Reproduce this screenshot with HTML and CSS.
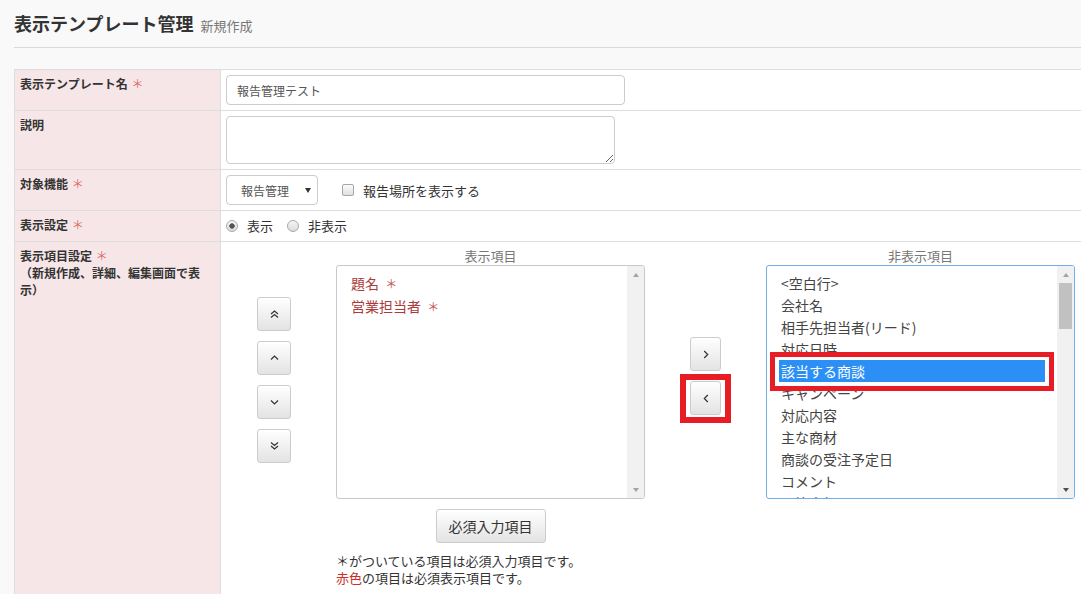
FILE: index.html
```html
<!DOCTYPE html>
<html lang="ja">
<head>
<meta charset="utf-8">
<title>表示テンプレート管理</title>
<link rel="stylesheet" href="styles.css">
</head>
<body>
<div class="page">
  <div class="page-header">
    <h1 class="title">表示テンプレート管理<small class="subtitle">新規作成</small></h1>
  </div>

  <div class="form">
    <div class="row">
      <div class="label">表示テンプレート名 <span class="req">＊</span></div>
      <div class="value"><input class="text-input" type="text" value="報告管理テスト"></div>
    </div>

    <div class="row">
      <div class="label">説明</div>
      <div class="value"><textarea class="textarea"></textarea></div>
    </div>

    <div class="row">
      <div class="label">対象機能 <span class="req">＊</span></div>
      <div class="value inline">
        <div class="select"><span>報告管理</span><span class="caret"></span></div>
        <label class="check-label"><span class="checkbox"></span>報告場所を表示する</label>
      </div>
    </div>

    <div class="row">
      <div class="label">表示設定 <span class="req">＊</span></div>
      <div class="value inline radios">
        <label class="radio-label"><span class="radio checked"></span>表示</label>
        <label class="radio-label"><span class="radio"></span>非表示</label>
      </div>
    </div>

    <div class="row">
      <div class="label">表示項目設定 <span class="req">＊</span><br>（新規作成、詳細、編集画面で表示）</div>
      <div class="value items">
        <div class="order-buttons">
          <button class="btn-icon" type="button"><svg width="9" height="8" viewBox="0 0 9 8"><path d="M1 4L4.5 1L8 4M1 7.5L4.5 4.5L8 7.5" fill="none" stroke="#333" stroke-width="1.2"/></svg></button>
          <button class="btn-icon" type="button"><svg width="9" height="6" viewBox="0 0 9 6"><path d="M1 4.5L4.5 1L8 4.5" fill="none" stroke="#333" stroke-width="1.2"/></svg></button>
          <button class="btn-icon" type="button"><svg width="9" height="6" viewBox="0 0 9 6"><path d="M1 1.5L4.5 5L8 1.5" fill="none" stroke="#333" stroke-width="1.2"/></svg></button>
          <button class="btn-icon" type="button"><svg width="9" height="8" viewBox="0 0 9 8"><path d="M1 0.5L4.5 3.5L8 0.5M1 4L4.5 7L8 4" fill="none" stroke="#333" stroke-width="1.2"/></svg></button>
        </div>

        <div class="list-col">
          <div class="list-title">表示項目</div>
          <div class="listbox">
            <ul class="options">
              <li class="required">題名 <span class="star">＊</span></li>
              <li class="required">営業担当者 <span class="star">＊</span></li>
            </ul>
            <div class="scrollbar">
              <span class="sb-arrow up"></span>
              <span class="sb-space"></span>
              <span class="sb-arrow down"></span>
            </div>
          </div>
          <div class="btn-wrap"><button class="btn" type="button">必須入力項目</button></div>
          <p class="note">＊がついている項目は必須入力項目です。<br><span class="red">赤色</span>の項目は必須表示項目です。</p>
        </div>

        <div class="move-buttons">
          <button class="btn-icon narrow" type="button"><svg width="6" height="9" viewBox="0 0 6 9"><path d="M1.2 1L4.7 4.5L1.2 8" fill="none" stroke="#333" stroke-width="1.2"/></svg></button>
          <div class="move-btn-wrap">
            <button class="btn-icon narrow" type="button"><svg width="6" height="9" viewBox="0 0 6 9"><path d="M4.8 1L1.3 4.5L4.8 8" fill="none" stroke="#333" stroke-width="1.2"/></svg></button>
            <span class="callout callout-btn"></span>
          </div>
        </div>

        <div class="list-col">
          <div class="list-title">非表示項目</div>
          <div class="listbox focused">
            <ul class="options">
              <li>&lt;空白行&gt;</li>
              <li>会社名</li>
              <li>相手先担当者(リード)</li>
              <li>対応日時</li>
              <li class="selected">該当する商談</li>
              <li>キャンペーン</li>
              <li>対応内容</li>
              <li>主な商材</li>
              <li>商談の受注予定日</li>
              <li>コメント</li>
              <li>予算金額</li>
            </ul>
            <div class="scrollbar">
              <span class="sb-arrow up"></span>
              <span class="sb-thumb"></span>
              <span class="sb-space"></span>
              <span class="sb-arrow down dark"></span>
            </div>
            <span class="callout callout-select"></span>
          </div>
        </div>
      </div>
    </div>
  </div>
</div>
</body>
</html>
```

FILE: styles.css
```css
* {
  box-sizing: border-box;
}

html,
body {
  margin: 0;
  overflow: hidden;
}

body {
  width: 1081px;
  height: 594px;
  background: #f9f9f9;
  font-family: "Noto Sans CJK JP", "Noto Sans", sans-serif;
  font-size: 13px;
  color: #333;
}

.page {
  padding-left: 14px;
}

.page-header {
  height: 48px;
  padding-top: 11px;
  border-bottom: 1px solid #d9d9d9;
  margin-bottom: 21px;
  overflow: hidden;
}

.title {
  margin: 0;
  font-size: 18px;
  line-height: 24px;
  font-weight: bold;
  color: #333;
}

.subtitle {
  margin-left: 7px;
  font-size: 13px;
  line-height: 1;
  font-weight: normal;
  color: #777;
}

.form {
  width: 1080px;
  border-top: 1px solid #ddd;
  border-left: 1px solid #ddd;
  background: #fff;
}

.row {
  display: flex;
  border-bottom: 1px solid #ddd;
}

.label {
  flex: 0 0 206px;
  padding: 5px;
  background: #f6e6e7;
  border-right: 1px solid #ddd;
  font-size: 12px;
  font-weight: bold;
  line-height: 17px;
  color: #333;
}

.req {
  margin-left: 1px;
  font-weight: normal;
  color: #dc6a67;
}

.value {
  flex: 1;
  padding: 5px;
  background: #fff;
}

.text-input {
  display: block;
  width: 399px;
  height: 30px;
  padding: 0 10px;
  border: 1px solid #ccc;
  border-radius: 4px;
  background: #fff;
  font: 12px "Noto Sans CJK JP", sans-serif;
  color: #555;
}

.textarea {
  display: block;
  width: 389px;
  height: 48px;
  margin: 0;
  border: 1px solid #ccc;
  border-radius: 4px;
  background: #fff;
}

.inline {
  display: flex;
  align-items: center;
}

.select {
  display: flex;
  align-items: center;
  justify-content: space-between;
  width: 92px;
  height: 30px;
  padding: 0 6px 0 14px;
  border: 1px solid #ccc;
  border-radius: 4px;
  background: #fff;
  font-size: 12px;
  color: #555;
}

.caret {
  width: 0;
  height: 0;
  border-left: 3.5px solid transparent;
  border-right: 3.5px solid transparent;
  border-top: 5px solid #333;
}

.check-label {
  display: flex;
  align-items: center;
  gap: 9px;
  margin-left: 24px;
  font-size: 13px;
  color: #333;
}

.checkbox {
  display: inline-block;
  width: 12px;
  height: 12px;
  border: 1px solid #a6a6a6;
  border-radius: 2px;
  background: linear-gradient(#fbfbfb, #e0e0e0);
}

.radios {
  line-height: 20px;
}

.radio-label {
  display: flex;
  align-items: center;
  gap: 9px;
  margin-right: 14px;
  font-size: 13px;
  color: #333;
}

.radio {
  display: inline-block;
  width: 12px;
  height: 12px;
  border: 1px solid #aaa;
  border-radius: 50%;
  background: linear-gradient(#f5f5f5, #dcdcdc);
}

.radio.checked {
  background: radial-gradient(circle, #555 0 2.4px, transparent 3px), linear-gradient(#f5f5f5, #dcdcdc);
}

.items {
  display: flex;
  align-items: flex-start;
  padding-bottom: 20px;
}

.order-buttons {
  display: flex;
  flex-direction: column;
  gap: 10px;
  margin: 50px 0 0 31px;
}

.move-buttons {
  display: flex;
  flex-direction: column;
  gap: 10px;
  margin: 90px 0 0 45px;
}

.btn-icon {
  display: flex;
  align-items: center;
  justify-content: center;
  width: 34px;
  height: 34px;
  padding: 0;
  border: 1px solid #ccc;
  border-radius: 3px;
  background: linear-gradient(#fff, #e3e3e3);
}

.btn-icon.narrow {
  width: 31px;
}

.move-btn-wrap {
  position: relative;
}

.callout {
  position: absolute;
  border: 5px solid #e81c24;
  pointer-events: none;
}

.callout-btn {
  left: -10px;
  top: -7px;
  width: 51px;
  height: 49px;
  border-width: 6px;
}

.callout-select {
  left: 3px;
  top: 86px;
  width: 284px;
  height: 39px;
}

.list-col {
  width: 309px;
  margin-left: 45px;
}

.list-title {
  font-size: 13px;
  line-height: 18px;
  text-align: center;
  color: #777;
}

.listbox {
  position: relative;
  display: flex;
  height: 234px;
  border: 1px solid #c8c8c8;
  border-radius: 3px;
  background: #fff;
  overflow: hidden;
}

.listbox.focused {
  border-color: #74aee6;
}

.options {
  flex: 1;
  margin: 0;
  padding: 6px 12px 0;
  list-style: none;
  font-size: 14px;
  line-height: 22px;
  color: #444;
  overflow: hidden;
}

.options li {
  padding-left: 2px;
  white-space: nowrap;
}

.options li.required {
  color: #ab3b3a;
}

.options li.selected {
  background: #2b8ff5;
  color: #fff;
}

.star {
  margin-left: 3px;
  font-size: 12px;
  color: #c0504d;
}

.scrollbar {
  display: flex;
  flex-direction: column;
  flex: 0 0 17px;
  background: #f1f1f1;
}

.sb-arrow {
  display: flex;
  align-items: center;
  justify-content: center;
  height: 17px;
}

.sb-arrow::before {
  content: "";
  width: 0;
  height: 0;
  border-left: 3.5px solid transparent;
  border-right: 3.5px solid transparent;
}

.sb-arrow.up::before {
  border-bottom: 4px solid #a3a3a3;
}

.sb-arrow.down::before {
  border-top: 4px solid #a3a3a3;
}

.sb-arrow.down.dark::before {
  border-top-color: #505050;
}

.sb-thumb {
  height: 46px;
  margin: 0 2px;
  background: #c1c1c1;
}

.sb-space {
  flex: 1;
}

.btn-wrap {
  margin-top: 10px;
  text-align: center;
}

.btn {
  width: 110px;
  height: 34px;
  padding: 0;
  border: 1px solid #ccc;
  border-radius: 3px;
  background: linear-gradient(#fff, #e3e3e3);
  font: 14px "Noto Sans CJK JP", sans-serif;
  color: #333;
}

.note {
  margin: 9px 0 0;
  font-size: 13px;
  line-height: 17px;
  color: #333;
}

.note .red {
  color: #c9302c;
}
```
